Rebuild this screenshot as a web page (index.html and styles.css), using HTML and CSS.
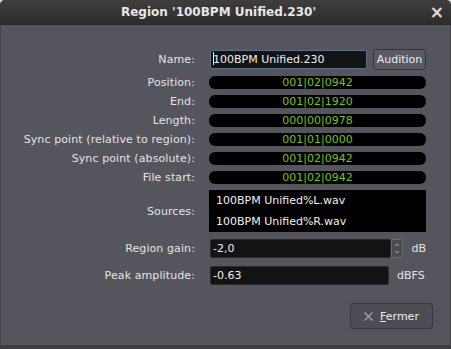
FILE: index.html
```html
<!DOCTYPE html>
<html>
<head>
<meta charset="utf-8">
<link rel="stylesheet" href="styles.css">
</head>
<body>
<div class="dialog">
  <div class="titlebar">
    <span class="title">Region '100BPM Unified.230'</span>
    <span class="close">×</span>
  </div>
  <div class="content">
    <div class="form">
      <div class="label">Name:</div>
      <div class="value row">
        <div class="entry focus name"><span class="caret"></span>100BPM Unified.230</div>
        <div class="btn audition">Audition</div>
      </div>

      <div class="label">Position:</div>
      <div class="value clock">001|02|0942</div>

      <div class="label">End:</div>
      <div class="value clock">001|02|1920</div>

      <div class="label">Length:</div>
      <div class="value clock">000|00|0978</div>

      <div class="label">Sync point (relative to region):</div>
      <div class="value clock">001|01|0000</div>

      <div class="label">Sync point (absolute):</div>
      <div class="value clock">001|02|0942</div>

      <div class="label">File start:</div>
      <div class="value clock">001|02|0942</div>

      <div class="label">Sources:</div>
      <div class="value sources">
        <div class="src">100BPM Unified%L.wav</div>
        <div class="src">100BPM Unified%R.wav</div>
      </div>

      <div class="label">Region gain:</div>
      <div class="value row">
        <div class="entry gain">-2,0</div>
        <div class="spin">
          <svg width="12" height="19" viewBox="0 0 12 19">
            <path d="M3.5 6.5 L6 4 L8.5 6.5" fill="none" stroke="#b8b8c0" stroke-width="1"/>
            <path d="M3.5 12.5 L6 15 L8.5 12.5" fill="none" stroke="#b8b8c0" stroke-width="1"/>
          </svg>
        </div>
        <div class="unit db">dB</div>
      </div>

      <div class="label">Peak amplitude:</div>
      <div class="value row">
        <div class="entry peak">-0.63</div>
        <div class="unit dbfs">dBFS</div>
      </div>
    </div>
    <div class="actions">
      <div class="btn fermer">
        <svg class="x" width="9" height="9" viewBox="0 0 9 9">
          <path d="M0.5 0.5 L8.5 8.5 M8.5 0.5 L0.5 8.5" stroke="#a6a6ae" stroke-width="1.2" fill="none"/>
        </svg>
        <span><u>F</u>ermer</span>
      </div>
    </div>
  </div>
</div>
</body>
</html>
```

FILE: styles.css
```css
html, body {
  margin: 0;
  padding: 0;
  background: #d8d8d8;
}
body {
  width: 451px;
  height: 349px;
  overflow: hidden;
  font-family: "DejaVu Sans", sans-serif;
  font-size: 11px;
  color: #e4e4e4;
}
.dialog {
  width: 451px;
  height: 349px;
  display: flex;
  flex-direction: column;
  background: #55555e;
  border-radius: 5px 5px 0 0;
  overflow: hidden;
}
.titlebar {
  height: 25px;
  flex: none;
  background: linear-gradient(#3e3e3e, #2c2c2c);
  display: flex;
  align-items: center;
  justify-content: center;
  position: relative;
  border-bottom: 1px solid #2a2a2a;
  box-sizing: border-box;
}
.title {
  font-weight: bold;
  font-size: 12px;
  color: #e6e6e6;
  margin-right: 14px;
}
.close {
  position: absolute;
  right: 7px;
  top: 2px;
  font-size: 17px;
  font-weight: bold;
  color: #e0e0e0;
}
.content {
  flex: 1;
  border-left: 1px solid #44444b;
  border-right: 1px solid #44444b;
  border-bottom: 4px solid #3c3c41;
  padding: 24px 0 0 7px;
  display: flex;
  flex-direction: column;
}
.form {
  display: grid;
  grid-template-columns: 187px 217px;
  column-gap: 14px;
  row-gap: 6px;
  align-items: center;
}
.label {
  text-align: right;
  white-space: nowrap;
  letter-spacing: 0.1px;
}
.row {
  display: flex;
  align-items: center;
  height: 21px;
}
.entry {
  background: #131313;
  border: 1px solid #2b2b2e;
  border-radius: 2px;
  height: 19px;
  box-sizing: border-box;
  padding: 0 2px;
  line-height: 17px;
  color: #f0f0f0;
  white-space: nowrap;
}
.entry.focus {
  border-color: #5a6f8a;
}
.name {
  width: 157px;
  margin-left: 1px;
}
.caret {
  display: inline-block;
  width: 1px;
  height: 13px;
  background: #f0f0f0;
  vertical-align: -2px;
  margin-right: -1px;
}
.btn {
  border: 1px solid #34343a;
  border-radius: 3px;
  background: #5a5a63;
  color: #ececec;
  box-sizing: border-box;
  display: flex;
  align-items: center;
  justify-content: center;
}
.audition {
  margin-left: 6px;
  width: 53px;
  height: 21px;
}
.clock {
  height: 13px;
  background: #000;
  border-radius: 6px;
  color: #76c21c;
  text-align: center;
  line-height: 13px;
}
.sources {
  background: #000;
  height: 42px;
  padding-left: 7px;
  box-sizing: border-box;
  color: #f0f0f0;
}
.src {
  height: 21px;
  line-height: 21px;
}
.gain {
  width: 182px;
  margin-left: 1px;
}
.spin {
  width: 12px;
  height: 19px;
  border: 1px solid #6a6a72;
  border-radius: 2px;
  background: #4a4a52;
  box-sizing: border-box;
  display: flex;
  align-items: center;
  justify-content: center;
}
.spin svg {
  display: block;
}
.unit {
  color: #e4e4e4;
}
.db {
  margin-left: 8px;
}
.peak {
  width: 179px;
  margin-left: 1px;
}
.dbfs {
  margin-left: 8px;
}
.actions {
  display: flex;
  justify-content: flex-end;
  padding-right: 17px;
  margin-top: 17px;
}
.fermer {
  width: 83px;
  height: 26px;
  background: #4d4d55;
  border-color: #38383e;
  gap: 7px;
}
.fermer .x {
  display: block;
}
.fermer u {
  text-decoration-thickness: 1px;
}
```
